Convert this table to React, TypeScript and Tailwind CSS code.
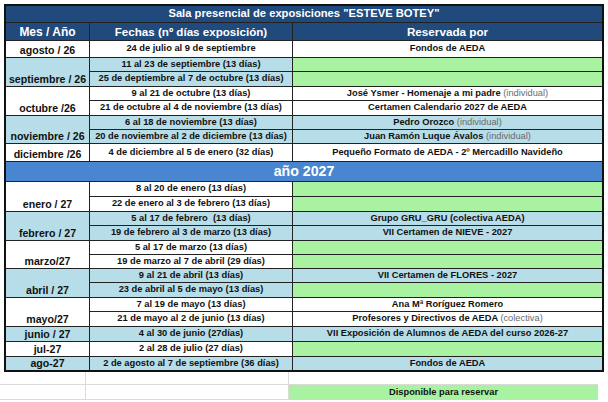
import React from "react";

const BLUE = "bg-[#b7dde8]";
const WHITE = "bg-white";
const GREEN = "bg-[#a9f2a1]";

type Sub = { date: string; res?: React.ReactNode; resBg: string };
type Group = { month: string; bg: string; subs: Sub[] };

const Gray = ({ children }: { children: React.ReactNode }) => (
  <span className="font-normal text-[#6a6a6a]">{children}</span>
);

const groups2026: Group[] = [
  { month: "agosto / 26", bg: WHITE, subs: [{ date: "24 de julio al 9 de septiembre", res: "Fondos de AEDA", resBg: WHITE }] },
  {
    month: "septiembre / 26",
    bg: BLUE,
    subs: [
      { date: "11 al 23 de septiembre (13 días)", resBg: GREEN },
      { date: "25 de deptiembre al 7 de octubre (13 días)", resBg: GREEN },
    ],
  },
  {
    month: "octubre /26",
    bg: WHITE,
    subs: [
      { date: "9 al 21 de octubre (13 días)", res: <>José Ysmer - Homenaje a mi padre <Gray>(individual)</Gray></>, resBg: WHITE },
      { date: "21 de octubre al 4 de noviembre (13 días)", res: "Certamen Calendario 2027 de AEDA", resBg: WHITE },
    ],
  },
  {
    month: "noviembre / 26",
    bg: BLUE,
    subs: [
      { date: "6 al 18 de noviembre (13 días)", res: <>Pedro Orozco <Gray>(individual)</Gray></>, resBg: BLUE },
      { date: "20 de noviembre al 2 de diciembre (13 días)", res: <>Juan Ramón Luque Ávalos <Gray>(individual)</Gray></>, resBg: BLUE },
    ],
  },
  {
    month: "diciembre /26",
    bg: WHITE,
    subs: [{ date: "4 de diciembre al 5 de enero (32 días)", res: "Pequeño Formato de AEDA - 2º Mercadillo Navideño", resBg: WHITE }],
  },
];

const groups2027: Group[] = [
  {
    month: "enero / 27",
    bg: WHITE,
    subs: [
      { date: "8 al 20 de enero (13 días)", resBg: GREEN },
      { date: "22 de enero al 3 de febrero (13 días)", resBg: GREEN },
    ],
  },
  {
    month: "febrero / 27",
    bg: BLUE,
    subs: [
      { date: "5 al 17 de febrero\u00a0 (13 días)", res: "Grupo GRU_GRU (colectiva AEDA)", resBg: BLUE },
      { date: "19 de febrero al 3 de marzo (13 días)", res: "VII Certamen de NIEVE - 2027", resBg: BLUE },
    ],
  },
  {
    month: "marzo/27",
    bg: WHITE,
    subs: [
      { date: "5 al 17 de marzo (13 días)", resBg: GREEN },
      { date: "19 de marzo al 7 de abril (29 días)", resBg: GREEN },
    ],
  },
  {
    month: "abril / 27",
    bg: BLUE,
    subs: [
      { date: "9 al 21 de abril (13 días)", res: "VII Certamen de FLORES - 2027", resBg: BLUE },
      { date: "23 de abril al 5 de mayo (13 días)", resBg: GREEN },
    ],
  },
  {
    month: "mayo/27",
    bg: WHITE,
    subs: [
      { date: "7 al 19 de mayo (13 días)", res: "Ana Mª Roríguez Romero", resBg: WHITE },
      { date: "21 de mayo al 2 de junio (13 días)", res: <>Profesores y Directivos de AEDA <Gray>(colectiva)</Gray></>, resBg: WHITE },
    ],
  },
  {
    month: "junio / 27",
    bg: BLUE,
    subs: [{ date: "4 al 30 de junio (27días)", res: "VII Exposición de Alumnos de AEDA del curso 2026-27", resBg: BLUE }],
  },
  { month: "jul-27", bg: WHITE, subs: [{ date: "2 al 28 de julio (27 días)", resBg: GREEN }] },
  {
    month: "ago-27",
    bg: BLUE,
    subs: [{ date: "2 de agosto al 7 de septiembre (36 días)", res: "Fondos de AEDA", resBg: BLUE }],
  },
];

function GroupCells({ g }: { g: Group }) {
  const span = g.subs.length === 2 ? "row-span-2" : "";
  return (
    <>
      <div className={`${g.bg} ${span} flex items-end justify-center pb-[1px] text-[10.6px] leading-none`}>
        {g.month}
      </div>
      {g.subs.map((s, i) => (
        <React.Fragment key={i}>
          <div className={`${g.bg} flex items-center justify-center whitespace-pre text-[9.3px] leading-none`}>{s.date}</div>
          <div className={`${s.resBg} flex items-center justify-center whitespace-pre text-[9.3px] leading-none`}>{s.res}</div>
        </React.Fragment>
      ))}
    </>
  );
}

export default function App() {
  return (
    <div className="w-[608px] h-[402px] overflow-hidden bg-white font-['Liberation_Sans',Arial,sans-serif] font-bold text-[#111]">
      <div className="pt-[4px] pl-[4px]">
        <div className="w-[600px] border-2 border-[#111] bg-[#222]">
          <div className="grid grid-cols-[83px_202px_309px] grid-rows-[16px_17px_16px_13px_14px_13px_14px_13px_13px_17px_19px_14px_14px_13px_14px_13px_13px_13px_14px_13px_14px_14px_14px_13px] gap-px">
            <div className="col-span-3 bg-[#20497c] text-white text-[11.2px] leading-none flex items-center justify-center">
              Sala presencial de exposiciones "ESTEVE BOTEY"
            </div>
            <div className="bg-[#20497c] text-white text-[12px] leading-none flex items-center justify-center">Mes / Año</div>
            <div className="bg-[#20497c] text-white text-[11.6px] leading-none flex items-center justify-center">
              Fechas (nº días exposición)
            </div>
            <div className="bg-[#20497c] text-white text-[11.7px] leading-none flex items-center justify-center">Reservada por</div>
            {groups2026.map((g) => (
              <GroupCells key={g.month} g={g} />
            ))}
            <div className="col-span-3 bg-[#4a86cf] text-white text-[14.2px] leading-none flex items-center justify-center">
              año 2027
            </div>
            {groups2027.map((g) => (
              <GroupCells key={g.month} g={g} />
            ))}
          </div>
        </div>
        <div className="grid grid-cols-[86px_203px_309px] grid-rows-[13px_15px] -ml-[4px] pl-[0px]">
          <div className="border-r border-b border-[#dadada]" />
          <div className="border-r border-b border-[#dadada]" />
          <div className="border-b border-[#dadada]" />
          <div className="border-r border-b border-[#dadada]" />
          <div className="border-r border-b border-[#dadada]" />
          <div className="bg-[#a9f2a1] flex items-center justify-center text-[9.3px] leading-none">Disponible para reservar</div>
        </div>
      </div>
    </div>
  );
}
